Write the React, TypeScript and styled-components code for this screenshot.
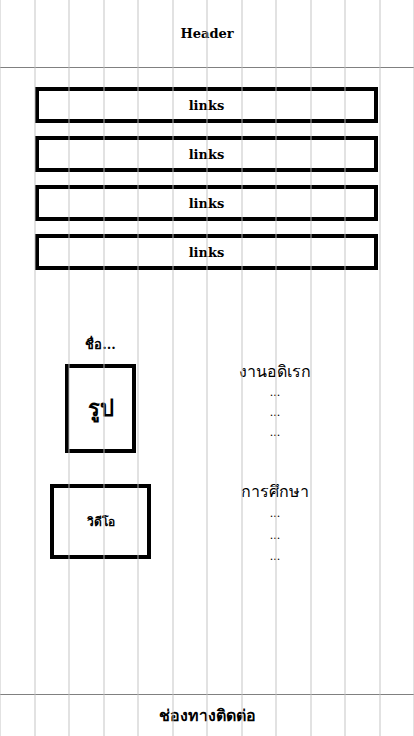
import React from 'react';
import styled, { createGlobalStyle } from 'styled-components';

const GlobalStyle = createGlobalStyle`
    html, body {
        margin: 0;
        padding: 0;
        background: #fff;
    }
    body {
        font-family: 'DejaVu Serif', serif;
        color: #000;
    }
`;

const Page = styled.div`
    min-height: 736px;
    display: flex;
    flex-direction: column;
`;

const Header = styled.header`
    height: 67px;
    border-bottom: 1px solid #808080;
    display: flex;
    align-items: center;
    justify-content: center;
    font-weight: bold;
    font-size: 13px;
`;

const Main = styled.main`
    flex: 1;
`;

const LinkList = styled.nav`
    display: flex;
    flex-direction: column;
    gap: 13px;
    padding: 19px 36px 0 35px;
`;

const LinkBox = styled.a`
    height: 36px;
    box-sizing: border-box;
    border: 4px solid #000;
    display: flex;
    align-items: center;
    justify-content: center;
    font-weight: bold;
    font-size: 13px;
    color: #000;
    text-decoration: none;
`;

const Profile = styled.section`
    display: grid;
    grid-template-columns: 131px 1fr;
    row-gap: 28px;
    align-items: start;
    margin-top: 67px;
    padding: 0 30px 0 35px;
`;

const LeftCol = styled.div`
    display: flex;
    flex-direction: column;
    align-items: center;
`;

const Name = styled.div`
    font-weight: bold;
    font-size: 13px;
    line-height: 16px;
    margin-bottom: 11px;
`;

const Frame = styled.div<{ $w: number; $h: number; $size: number; $top?: number }>`
    width: ${(p) => p.$w}px;
    height: ${(p) => p.$h}px;
    margin-top: ${(p) => p.$top ?? 0}px;
    box-sizing: border-box;
    border: 4px solid #000;
    display: flex;
    align-items: center;
    justify-content: center;
    font-weight: bold;
    font-size: ${(p) => p.$size}px;
`;

const RightCol = styled.div<{ $top: number }>`
    display: flex;
    flex-direction: column;
    align-items: center;
    padding-top: ${(p) => p.$top}px;
`;

const Topic = styled.div`
    font-size: 16px;
    line-height: 22px;
`;

const Dots = styled.div<{ $lh: number }>`
    font-size: 11px;
    line-height: ${(p) => p.$lh}px;
`;

const Footer = styled.footer`
    height: 41px;
    border-top: 1px solid #808080;
    display: flex;
    align-items: center;
    justify-content: center;
    font-weight: bold;
    font-size: 16px;
`;

const GridOverlay = styled.div`
    position: fixed;
    inset: 0;
    display: grid;
    grid-template-columns: repeat(12, 1fr);
    pointer-events: none;
`;

const GridCol = styled.div`
    border-left: 1px solid rgba(190, 190, 190, 0.45);
    border-right: 1px solid rgba(190, 190, 190, 0.45);
`;

const links = ['links', 'links', 'links', 'links'];

const App = (): React.ReactElement => {
    return (
        <>
            <GlobalStyle />
            <Page>
                <Header>Header</Header>
                <Main>
                    <LinkList>
                        {links.map((l, i) => (
                            <LinkBox key={i} href="#">
                                {l}
                            </LinkBox>
                        ))}
                    </LinkList>
                    <Profile>
                        <LeftCol>
                            <Name>ชื่อ...</Name>
                            <Frame $w={71} $h={89} $size={22}>
                                รูป
                            </Frame>
                        </LeftCol>
                        <RightCol $top={24}>
                            <Topic>งานอดิเรก</Topic>
                            <Dots $lh={20}>...</Dots>
                            <Dots $lh={20}>...</Dots>
                            <Dots $lh={20}>...</Dots>
                        </RightCol>
                        <LeftCol>
                            <Frame $w={101} $h={75} $size={12} $top={3}>
                                วิดีโอ
                            </Frame>
                        </LeftCol>
                        <RightCol $top={0}>
                            <Topic>การศึกษา</Topic>
                            <Dots $lh={21.5}>...</Dots>
                            <Dots $lh={21.5}>...</Dots>
                            <Dots $lh={21.5}>...</Dots>
                        </RightCol>
                    </Profile>
                </Main>
                <Footer>ช่องทางติดต่อ</Footer>
            </Page>
            <GridOverlay>
                {Array.from({ length: 12 }, (_, i) => (
                    <GridCol key={i} />
                ))}
            </GridOverlay>
        </>
    );
};

export default App;
